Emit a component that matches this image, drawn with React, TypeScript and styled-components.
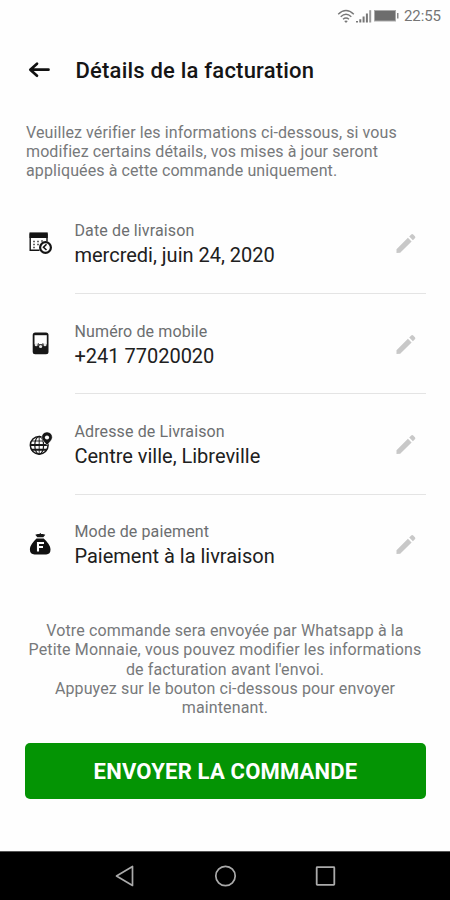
import React from "react";
import styled, { createGlobalStyle } from "styled-components";

const GlobalStyle = createGlobalStyle`
  * { box-sizing: border-box; }
  body { margin: 0; background: #fefefe; font-family: Roboto, "Liberation Sans", sans-serif; }
  svg { display: block; flex: none; }
`;

const Screen = styled.div`
  width: 450px;
  height: 900px;
  display: flex;
  flex-direction: column;
  background: #fefefe;
  overflow: hidden;
`;

const StatusBar = styled.div`
  height: 32px;
  flex: none;
  display: flex;
  align-items: center;
  justify-content: flex-end;
  padding-right: 9px;
  color: #757575;
`;

const Clock = styled.span`
  margin-left: 5px;
  font-size: 15px;
  line-height: 18px;
  letter-spacing: -0.05px;
`;

const Header = styled.header`
  height: 75px;
  flex: none;
  display: flex;
  align-items: center;
  padding: 0 26px 0 27px;
  gap: 24.5px;
`;

const Title = styled.h1`
  margin: 2px 0 0;
  font-size: 22px;
  line-height: 28px;
  font-weight: 500;
  letter-spacing: 0.21px;
  color: #151515;
  white-space: nowrap;
`;

const Note = styled.p<{ $center?: boolean }>`
  margin: ${(p) => (p.$center ? "26px 0 0" : "16px 0 0 26px")};
  font-size: 16px;
  line-height: 19.2px;
  letter-spacing: ${(p) => (p.$center ? "0.13px" : "0.1px")};
  color: #77797b;
  white-space: nowrap;
  flex: none;
  text-align: ${(p) => (p.$center ? "center" : "left")};
`;

const List = styled.div`
  flex: none;
  margin-top: 13px;
  padding: 0 24px 0 26px;
`;

const Row = styled.div`
  height: 100.4px;
  display: grid;
  grid-template-columns: 48.5px 1fr;
`;

const IconCell = styled.div`
  padding-top: 36.4px;
`;

const Body = styled.div<{ $last?: boolean }>`
  display: flex;
  align-items: center;
  justify-content: space-between;
  padding-right: 9px;
  border-bottom: 1px solid ${(p) => (p.$last ? "transparent" : "#e4e4e4")};
`;

const Texts = styled.div`
  padding-top: 2px;
`;

const Label = styled.div`
  font-size: 16px;
  line-height: 22px;
  letter-spacing: 0.12px;
  color: #6c6e70;
`;

const Value = styled.div`
  font-size: 20px;
  line-height: 26px;
  letter-spacing: -0.01px;
  color: #202020;
  white-space: nowrap;
`;

const Button = styled.button`
  flex: none;
  margin: 25.4px 24px 0 25px;
  height: 56px;
  border: 0;
  border-radius: 5px;
  background: #049404;
  color: #fff;
  font: 700 22px/56px Roboto, "Liberation Sans", sans-serif;
  letter-spacing: 0.2px;
  padding: 1px 0 0;
`;

const NavBar = styled.nav`
  height: 49px;
  flex: none;
  margin-top: auto;
  background: #000;
  border-top: 1px solid #555;
  display: flex;
  align-items: center;
  justify-content: center;
  gap: 76px;
`;

const Wifi = () => (
  <svg width="18" height="15" viewBox="0 0 18 15" fill="none" stroke="#777" strokeWidth="1.4">
    <path d="M1.2 5.2Q9-2.1 16.8 5.2M3.7 7.7Q9 3 14.3 7.7M6 10.3Q9 7.8 12 10.3" />
    <path d="M7.2 12.1Q9 10.8 10.8 12.1L9 14Z" fill="#777" stroke="none" />
  </svg>
);

const Signal = () => (
  <svg width="18" height="14" viewBox="0 0 18 14" fill="#777">
    <path d="M1 12h2v1.500H1zM4.300 10.200h2v3.300h-2zM7.600 7.500h2v6h-2zM10.900 4.500h2v9h-2z" />
    <path d="M14.200 1.200h2v12.300h-2z" fill="#999" />
  </svg>
);

const Battery = () => (
  <svg width="26" height="14" viewBox="0 0 26 14">
    <rect x="1.500" y="1.500" width="21" height="10.500" fill="#6d6d6d" stroke="#aaa" />
    <path d="M24 4h1.500v5.500H24z" fill="#888" />
  </svg>
);

const BackArrow = () => (
  <svg width="24" height="20" viewBox="0 0 24 20" fill="none" stroke="#111" strokeWidth="2.700">
    <path d="M21.500 9.700H3.500M10 3.700l-6.700 6 6.700 6" strokeLinecap="round" strokeLinejoin="round" />
  </svg>
);

const Pencil = () => (
  <svg width="22" height="22" viewBox="0 0 22 22" fill="#c8c8c8">
    <path d="M1.500 17.200L12.900 5.800l3.700 3.700L5.200 20.700l-3.700.2zM14.200 4.500l2-2q1-1 2 0l1.700 1.700q1 1 0 2l-2 2z" />
  </svg>
);

const CalendarIcon = () => (
  <svg width="28" height="28" viewBox="0 0 28 28" fill="none" stroke="#141414">
    <path d="M4.200 3.500v16.700h9.300M21 3.500v8" strokeWidth="1.400" />
    <path d="M3.500 2.400h18.200V8H3.500z" fill="#141414" stroke="none" />
    <path d="M7 11.500h2M11 11.500h2M15 11h2M7 14.500h2M11 14.500h2M7 17.500h2" strokeWidth="1.400" stroke="#666" />
    <circle cx="19.500" cy="17.500" r="5.400" fill="#fefefe" strokeWidth="2.200" />
    <path d="M20.500 14.300l-3 3 3 2.700" strokeWidth="1.600" />
  </svg>
);

const MobileIcon = () => (
  <svg width="28" height="28" viewBox="0 0 28 28">
    <rect x="6.700" y="2.500" width="15.800" height="21.700" rx="2.500" fill="#171717" />
    <rect x="8.500" y="5.200" width="12.300" height="9" fill="#fefefe" />
    <circle cx="10.200" cy="14.800" r="1.500" fill="#e4e4e4" />
    <circle cx="14.600" cy="16.500" r="1.600" fill="#e4e4e4" />
    <circle cx="19" cy="14.800" r="1.500" fill="#e4e4e4" />
    <path d="M12.300 13v3M16.900 13v3" stroke="#555" />
  </svg>
);

const GlobeIcon = () => (
  <svg width="28" height="28" viewBox="0 0 28 28" fill="none" stroke="#171717">
    <circle cx="13.200" cy="14.300" r="8.900" strokeWidth="1.500" />
    <ellipse cx="13.200" cy="14.300" rx="4.400" ry="8.900" strokeWidth="1.200" />
    <path d="M13.200 5.500v17.600M5.800 10h12" strokeWidth=".9" />
    <path d="M4.500 14h17.400M5.500 18.700h15.400" strokeWidth="1.900" />
    <path d="M21 14.200l-3.700-4.200a5.300 5.300 0 1 1 7.400 0z" fill="#171717" stroke="#fefefe" strokeWidth=".5" />
    <circle cx="21" cy="6.500" r="2.100" fill="#fefefe" stroke="none" />
  </svg>
);

const MoneyIcon = () => (
  <svg width="28" height="28" viewBox="0 0 28 28">
    <path d="M9.300 3.700l2.500-.8h1.700q.8-1.700 1.600 0h1.700l2.500.8-2 2.500h-6z" fill="#151515" />
    <path d="M10.500 7.600h7.200c3.500 3.300 6.800 7 6.800 11 0 3.300-1.500 4.800-4.300 4.800H8.500c-2.800 0-4.600-1.500-4.600-4.800 0-4 3.300-7.700 6.600-11z" fill="#111" />
    <path d="M12 20.500v-8.500h6M12 16h5" fill="none" stroke="#fefefe" strokeWidth="2.100" />
  </svg>
);

const details = [
  { label: "Date de livraison", value: "mercredi, juin 24, 2020", Icon: CalendarIcon },
  { label: "Numéro de mobile", value: "+241 77020020", Icon: MobileIcon },
  { label: "Adresse de Livraison", value: "Centre ville, Libreville", Icon: GlobeIcon },
  { label: "Mode de paiement", value: "Paiement à la livraison", Icon: MoneyIcon },
];

export default function App() {
  return (
    <Screen>
      <GlobalStyle />
      <StatusBar>
        <Wifi />
        <Signal />
        <Battery />
        <Clock>22:55</Clock>
      </StatusBar>
      <Header>
        <BackArrow />
        <Title>Détails de la facturation</Title>
      </Header>
      <Note>
        Veuillez vérifier les informations ci-dessous, si vous
        <br />
        modifiez certains détails, vos mises à jour seront
        <br />
        appliquées à cette commande uniquement.
      </Note>
      <List>
        {details.map(({ label, value, Icon }, i) => (
          <Row key={label}>
            <IconCell>
              <Icon />
            </IconCell>
            <Body $last={i === details.length - 1}>
              <Texts>
                <Label>{label}</Label>
                <Value>{value}</Value>
              </Texts>
              <Pencil />
            </Body>
          </Row>
        ))}
      </List>
      <Note $center>
        Votre commande sera envoyée par Whatsapp à la
        <br />
        Petite Monnaie, vous pouvez modifier les informations
        <br />
        de facturation avant l'envoi.
        <br />
        Appuyez sur le bouton ci-dessous pour envoyer
        <br />
        maintenant.
      </Note>
      <Button>ENVOYER LA COMMANDE</Button>
      <NavBar>
        <svg width="24" height="24" viewBox="0 0 24 24" fill="none" stroke="#aaa" strokeWidth="1.700" strokeLinejoin="round">
          <path d="M3.500 12L19.500 2.500v19z" />
        </svg>
        <svg width="24" height="24" viewBox="0 0 24 24" fill="none" stroke="#aaa" strokeWidth="1.700">
          <circle cx="12.500" cy="12" r="9.700" />
        </svg>
        <svg width="24" height="24" viewBox="0 0 24 24" fill="none" stroke="#aaa" strokeWidth="1.800">
          <rect x="3.700" y="3.200" width="17.600" height="17.600" rx=".5" />
        </svg>
      </NavBar>
    </Screen>
  );
}
